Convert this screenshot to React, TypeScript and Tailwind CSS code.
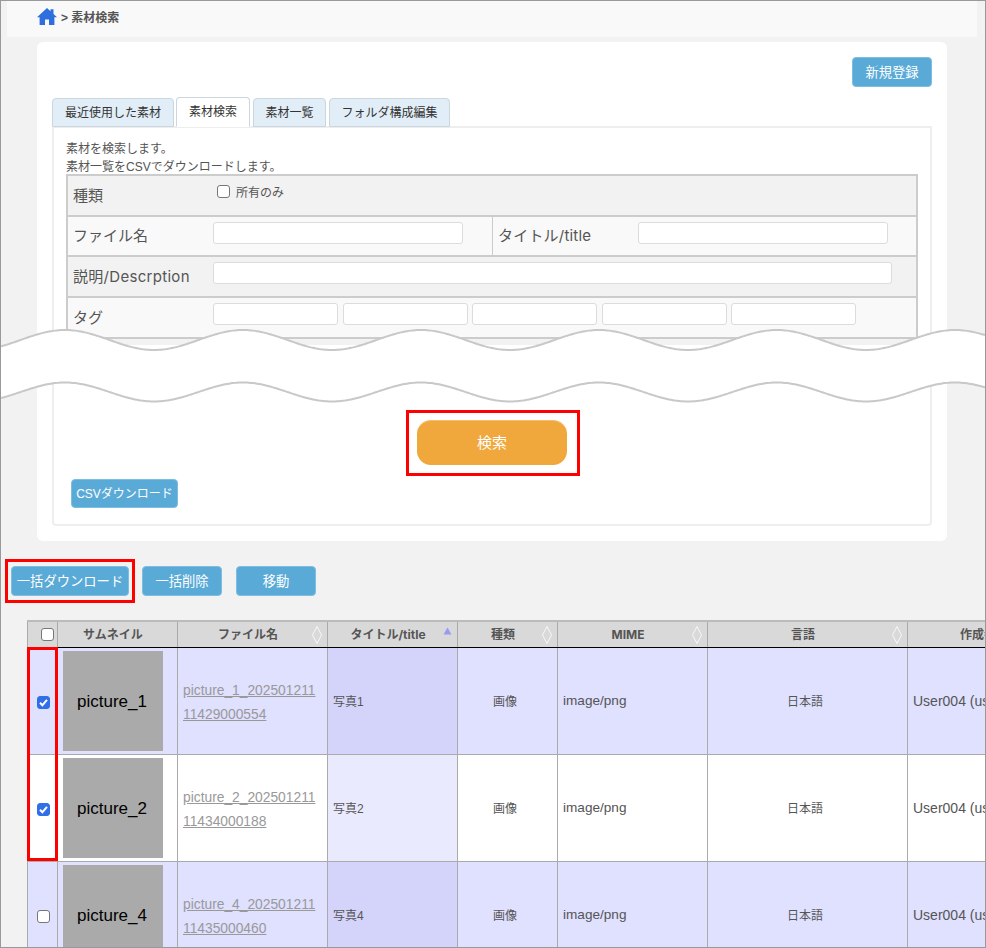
import React from "react";

const wave = (mid: number, amp: number) => {
  const pts: string[] = [];
  for (let x = 0; x <= 984; x += 2) {
    const y = mid - amp * Math.cos((2 * Math.PI * (x + 1 - 65)) / 178);
    pts.push(`${x},${y.toFixed(2)}`);
  }
  return pts;
};

function WaveBreak() {
  const top = wave(339, 10);
  const bottom = wave(391, 9.5);
  const fill = `M${top.join(" L")} L${[...bottom].reverse().join(" L")} Z`;
  return (
    <svg className="absolute left-0 top-0" width="984" height="420" viewBox="0 0 984 420" aria-hidden="true">
      <path d={fill} fill="#fff" />
      <path d={`M${top.join(" L")}`} fill="none" stroke="#c8c8c8" strokeWidth="2" />
      <path d={`M${bottom.join(" L")}`} fill="none" stroke="#c8c8c8" strokeWidth="2" />
    </svg>
  );
}

function HomeIcon() {
  return (
    <svg className="mr-[4px] shrink-0" width="20" height="17" viewBox="0 0 20 17" aria-hidden="true">
      <path
        d="M10 0 L13.5 3.2 L13.5 1.2 L16.5 1.2 L16.5 5.9 L20 9.2 L17.4 9.2 L17.4 17 L12 17 L12 11.5 L8 11.5 L8 17 L2.6 17 L2.6 9.2 L0 9.2 Z"
        fill="#2f6fdd"
      />
    </svg>
  );
}

function Box({ checked = false, className = "" }: { checked?: boolean; className?: string }) {
  return (
    <span className={`relative inline-flex w-[13px] h-[13px] ${className}`}>
      <input
        type="checkbox"
        readOnly
        checked={checked}
        className={`appearance-none block w-[13px] h-[13px] rounded-[3px] border ${checked ? "bg-[#2f6fe8] border-[#2f6fe8]" : "bg-white border-[#777]"}`}
      />
      {checked && (
        <svg className="absolute left-0 top-0" width="13" height="13" viewBox="0 0 13 13" aria-hidden="true">
          <path d="M3 6.8 L5.4 9.2 L10 3.8" fill="none" stroke="#fff" strokeWidth="2" />
        </svg>
      )}
    </span>
  );
}

function Sort({ up = false }: { up?: boolean }) {
  if (up) {
    return (
      <svg className="absolute right-[5px] top-[5px]" width="9" height="8" viewBox="0 0 9 8" aria-hidden="true">
        <path d="M4.5 0.5 L8.5 7.5 L0.5 7.5 Z" fill="#9a9af0" />
      </svg>
    );
  }
  return (
    <svg className="absolute right-[5px] top-[4px]" width="10" height="18" viewBox="0 0 10 18" aria-hidden="true">
      <path d="M5 0.5 L9.5 9 L5 17.5 L0.5 9 Z" fill="none" stroke="#fff" strokeWidth="0.8" />
    </svg>
  );
}

const Btn = ({ children, className = "" }: { children: React.ReactNode; className?: string }) => (
  <button className={`bg-[#5aaad8] text-white rounded-[4px] border border-[#7fbde0] flex items-center justify-center pt-[1px] ${className}`}>
    {children}
  </button>
);

const Field = ({ className = "" }: { className?: string }) => (
  <input type="text" className={`h-[22px] bg-white border border-[#dcdcdc] rounded-[3px] ${className}`} />
);

const tabs = [
  { t: "最近使用した素材", w: "w-[122px]", active: false },
  { t: "素材検索", w: "w-[74px] ml-[2px]", active: true },
  { t: "素材一覧", w: "w-[73px] ml-[3px]", active: false },
  { t: "フォルダ構成編集", w: "w-[121px] ml-[3px]", active: false },
];

const headers = [
  { t: "", s: false },
  { t: "サムネイル", s: false },
  { t: "ファイル名", s: true },
  { t: "タイトル/title", s: true, up: true },
  { t: "種類", s: true },
  { t: "MIME", s: true },
  { t: "言語", s: true },
  { t: "作成者", s: true },
];

const rows = [
  { p: "picture_1", f: "picture_1_20250121111429000554", title: "写真1", checked: true, alt: true },
  { p: "picture_2", f: "picture_2_20250121111434000188", title: "写真2", checked: true, alt: false },
  { p: "picture_4", f: "picture_4_20250121111435000460", title: "写真4", checked: false, alt: true },
];

const labelFont = "[font-family:'Inter','Noto_Sans_CJK_JP',sans-serif]";

export default function App() {
  return (
    <div className="relative w-[986px] h-[948px] overflow-hidden bg-[#f2f2f2] border border-[#999] [font-family:'Liberation_Sans','Noto_Sans_CJK_JP',sans-serif]">
      {/* breadcrumb */}
      <div className="ml-[6px] w-[970px] h-[36px] bg-[#f9f9f9] flex items-start pt-[7px] pl-[30px] text-[12px] font-bold text-[#555]">
        <HomeIcon />
        <span className="mt-[1px]">&gt; 素材検索</span>
      </div>

      {/* panel */}
      <div className="ml-[36px] mt-[5px] w-[910px] h-[499px] bg-white rounded-[6px] pt-[15px] pl-[15px]">
        <div className="w-[880px] flex justify-end">
          <Btn className="w-[80px] h-[30px] text-[13.3px]">新規登録</Btn>
        </div>
        <div className="flex mt-[11px] h-[29px] relative z-10">
          {tabs.map((t) => (
            <div
              key={t.t}
              className={`${t.w} text-[12px] text-[#333] border border-[#ccd6de] rounded-t-[4px] flex items-center justify-center ${t.active ? "bg-white border-b-white h-[30px] -mt-[1px]" : "bg-[#e1edf7] h-[29px]"}`}
            >
              {t.t}
            </div>
          ))}
        </div>
        <div className="w-[880px] h-[400px] -mt-[1px] border-2 border-[#eeeeee] rounded-b-[4px] pt-[12px] pl-[12px]">
          <p className="text-[12px] leading-[18px] text-[#555]">素材を検索します。</p>
          <p className="text-[12px] leading-[18px] text-[#555]">素材一覧をCSVでダウンロードします。</p>
          <div className={`-mt-[2px] w-[852px] border-l-2 border-r-2 border-t-2 border-[#ccc] text-[#555] text-[15px] ${labelFont}`}>
            <div className="h-[39px] bg-[#f2f2f2] flex">
              <span className="w-[145px] pl-[5px] pt-[9px]">種類</span>
              <label className="flex items-start pt-[8px] text-[12px] h-[30px]">
                <Box className="mt-[1px] ml-[4px] mr-[6px]" />
                所有のみ
              </label>
            </div>
            <div className="h-[40px] bg-[#f9f9f9] border-t-2 border-[#ccc] flex">
              <span className="w-[145px] pl-[5px] pt-[8px]">ファイル名</span>
              <Field className="w-[250px] mt-[5px]" />
              <span className="ml-[29px] w-[146px] border-l border-[#ccc] pl-[5px] pt-[8px] tracking-[0.2px]">タイトル/title</span>
              <Field className="w-[250px] mt-[5px]" />
            </div>
            <div className="h-[41px] bg-[#f2f2f2] border-t-2 border-[#ccc] flex">
              <span className="w-[145px] pl-[5px] pt-[9px] tracking-[0.3px]">説明/Descrption</span>
              <Field className="w-[679px] mt-[5px]" />
            </div>
            <div className="h-[41px] bg-[#f9f9f9] border-t-2 border-[#ccc] flex">
              <span className="w-[145px] pl-[5px] pt-[9px]">タグ</span>
              <div className="flex gap-[4.5px] mt-[5px]">
                <Field className="w-[125px]" />
                <Field className="w-[125px]" />
                <Field className="w-[125px]" />
                <Field className="w-[125px]" />
                <Field className="w-[125px]" />
              </div>
            </div>
            <div className="h-[8px] bg-[#f2f2f2] border-t-2 border-[#ccc]" />
          </div>
          <div className="flex justify-center mt-[65px] w-[852px] ml-[1px]">
            <div className="w-[174px] h-[66px] border-[3px] border-[#f00] flex items-center justify-center">
              <button className="w-[150px] h-[45px] mr-[2px] mb-[1px] bg-[#f0a83c] rounded-[14px] text-white text-[15px] border-t border-[#f4c070]">検索</button>
            </div>
          </div>
          <Btn className="ml-[5px] mt-[3px] w-[107px] h-[29px] text-[12px]">CSVダウンロード</Btn>
        </div>
      </div>

      {/* bulk actions */}
      <div className="flex items-center ml-[4px] mt-[18px]">
        <div className="w-[130px] h-[44px] border-[3px] border-[#f00] flex items-center justify-center">
          <Btn className="w-[118px] h-[30px] text-[13.3px]">一括ダウンロード</Btn>
        </div>
        <Btn className="w-[80px] h-[30px] ml-[7px] text-[13.3px]">一括削除</Btn>
        <Btn className="w-[80px] h-[30px] ml-[14px] text-[13.3px]">移動</Btn>
      </div>

      {/* results table */}
      <div className="ml-[26px] mt-[17px] relative">
        <table className="table-fixed border-collapse w-[1030px] text-[12px] text-[#555]">
          <colgroup>
            <col className="w-[30px]" />
            <col className="w-[120px]" />
            <col className="w-[150px]" />
            <col className="w-[130px]" />
            <col className="w-[100px]" />
            <col className="w-[150px]" />
            <col className="w-[200px]" />
            <col className="w-[150px]" />
          </colgroup>
          <thead>
            <tr className="h-[26px]">
              {headers.map((h, i) => (
                <th
                  key={i}
                  className={`relative bg-[#d9d9d9] border border-[#aaa] border-t-2 border-t-[#bbb] border-b-black font-bold text-[12px] ${labelFont} ${i === 0 ? "pl-[10px] pr-0" : "pl-0 pr-[9px] pt-[1px]"}`}
                >
                  {i === 0 ? <Box className="align-middle" /> : h.t}
                  {h.s && <Sort up={h.up} />}
                </th>
              ))}
            </tr>
          </thead>
          <tbody>
            {rows.map((r) => (
              <tr key={r.p} className={`h-[107px] ${r.alt ? "bg-[#e0e0ff]" : "bg-white"}`}>
                <td className="border border-[#aaa] text-center p-0 pl-[1px] pt-[2px]">
                  <Box checked={r.checked} className="align-middle" />
                </td>
                <td className="border border-[#aaa] p-0">
                  <div className="ml-[5px] w-[100px] h-[100px] bg-[#aaaaaa] flex items-center justify-center text-black text-[17px] pt-[2px] pr-[2px]">{r.p}</div>
                </td>
                <td className="border border-[#aaa] px-[5px] pt-[4px]">
                  <a className="block w-[136px] text-[13.8px] leading-[24px] text-[#999] underline break-all">{r.f}</a>
                </td>
                <td className={`border border-[#aaa] px-[5px] pt-[2px] ${r.alt ? "bg-[#d4d4fb]" : "bg-[#eaeaff]"}`}>{r.title}</td>
                <td className="border border-[#aaa] text-center pr-[5px] pt-[2px]">画像</td>
                <td className="border border-[#aaa] px-[5px] pt-[2px] text-[13.6px]">image/png</td>
                <td className="border border-[#aaa] text-center pr-[5px] pt-[2px]">日本語</td>
                <td className="border border-[#aaa] px-[5px] pt-[2px] text-[14px] whitespace-nowrap">User004 (user004)</td>
              </tr>
            ))}
          </tbody>
        </table>
        <div className="absolute left-0 top-[27px] w-[31px] h-[214px] border-[3px] border-[#f00] pointer-events-none" />
      </div>

      <WaveBreak />
    </div>
  );
}
